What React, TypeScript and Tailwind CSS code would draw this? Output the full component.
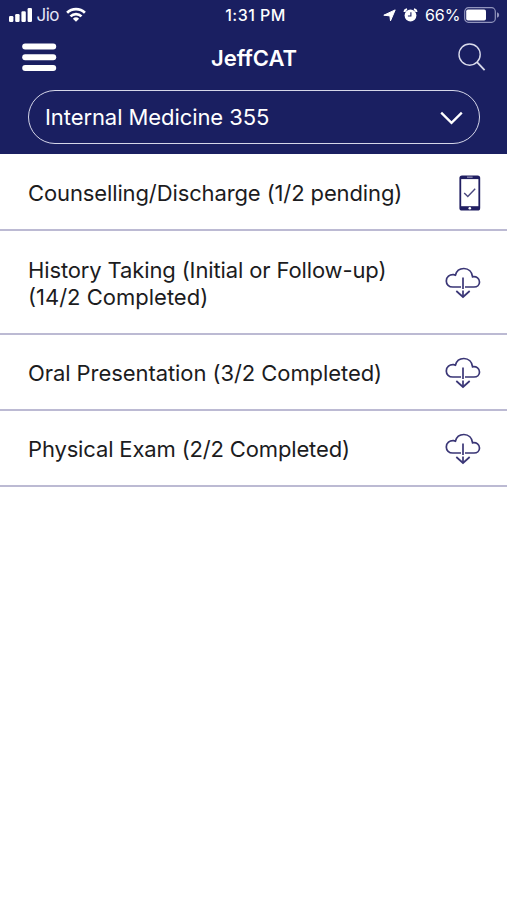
import type { ReactNode } from "react";

type TaskLine = {
  text: string;
  tracking: string;
};

type TaskRow = {
  id: string;
  lines: TaskLine[];
  height: string;
  icon: "device" | "cloud";
};

const tasks: TaskRow[] = [
  {
    id: "counselling",
    lines: [{ text: "Counselling/Discharge (1/2 pending)", tracking: "tracking-[-0.12px]" }],
    height: "h-[77px] pt-[2px]",
    icon: "device",
  },
  {
    id: "history",
    lines: [
      { text: "History Taking (Initial or Follow-up)", tracking: "tracking-[-0.13px]" },
      { text: "(14/2 Completed)", tracking: "tracking-normal" },
    ],
    height: "h-[104px] pt-[2px]",
    icon: "cloud",
  },
  {
    id: "oral",
    lines: [{ text: "Oral Presentation (3/2 Completed)", tracking: "tracking-[-0.07px]" }],
    height: "h-[76px] pt-[1px]",
    icon: "cloud",
  },
  {
    id: "physical",
    lines: [{ text: "Physical Exam (2/2 Completed)", tracking: "tracking-[-0.15px]" }],
    height: "h-[76px] pt-[1px]",
    icon: "cloud",
  },
];

function SignalIcon() {
  return (
    <svg width="24" height="16" viewBox="0 0 24 16" fill="currentColor">
      <rect x="0" y="9" width="4.4" height="6" rx="1.2" />
      <rect x="6.2" y="7" width="4.4" height="8" rx="1.2" />
      <rect x="12.4" y="4.2" width="4.4" height="10.8" rx="1.2" />
      <rect x="18.6" y="1" width="4.4" height="14" rx="1.2" />
    </svg>
  );
}

function WifiIcon() {
  return (
    <svg width="20" height="16" viewBox="0 0 20 16" fill="none" stroke="currentColor" strokeWidth="2.7">
      <path d="M1.1 5.8A12.6 12.6 0 0 1 18.9 5.8" />
      <path d="M4.5 9.4A7.9 7.9 0 0 1 15.5 9.4" />
      <path d="M10 14.8 6.9 11.8A4.5 4.5 0 0 1 13.1 11.8Z" fill="currentColor" stroke="none" />
    </svg>
  );
}

function LocationIcon() {
  return (
    <svg width="13" height="13" viewBox="0 0 13 13" fill="currentColor" stroke="currentColor" strokeWidth="1">
      <path d="M12.2.9 7.5 11.8 6.9 6.9.8 6.2Z" />
    </svg>
  );
}

function AlarmIcon() {
  return (
    <svg width="15" height="14" viewBox="0 0 15 14">
      <circle cx="7.5" cy="7.5" r="5.9" fill="currentColor" />
      <path d="M1.5 4A3 3 0 0 1 4.1 1.3M10.9 1.3A3 3 0 0 1 13.5 4" fill="none" stroke="currentColor" strokeWidth="2" />
      <path d="M7.9 4.2V8H4.9" fill="none" stroke="#1a1f61" strokeWidth="1.1" />
    </svg>
  );
}

function BatteryIcon() {
  return (
    <svg width="36" height="16" viewBox="0 0 36 16">
      <rect x="0.7" y="0.7" width="30.6" height="14.6" rx="3.8" fill="none" stroke="#9295bd" strokeWidth="1.2" />
      <rect x="2.2" y="2.5" width="19.8" height="11" rx="1.8" fill="white" />
      <path d="M33 5.2Q35.2 6 35.2 8T33 10.8Z" fill="#9295bd" />
    </svg>
  );
}

function DeviceIcon() {
  return (
    <svg width="22" height="36" viewBox="0 0 22 36">
      <rect x="0.4" y="0.4" width="20.8" height="35.2" rx="2.6" fill="#211f62" />
      <rect x="2.2" y="4.1" width="17.2" height="27.1" fill="white" />
      <path d="M8 2.2h5.6" stroke="#8b8ab0" strokeWidth="1.3" />
      <circle cx="10.8" cy="33.2" r="1.3" fill="white" />
      <path d="m5.2 17.9 3.6 3.7 7.4-7.8" fill="none" stroke="#4b487f" strokeWidth="1.4" />
    </svg>
  );
}

function CloudIcon() {
  return (
    <svg width="36" height="32" viewBox="0 0 36 32" fill="none" stroke="#3a3676" strokeWidth="1.7">
      <path d="M16 20H7.8C3.9 20 1.3 17.4 1.3 13.9 1.3 10 4.6 7.3 8.7 7.7L10.4 8.2C11.4 4.1 14.7 1.5 18.9 1.5 23.7 1.5 27 4.9 27.6 9.8 31.6 9.2 34.5 11.7 34.5 14.9 34.5 18 32.2 20 29 20H20" />
      <path d="M18 10.4V22" />
      <path d="M18 23.4V30" />
      <path d="m11.3 24 6.7 6 6.7-6" />
    </svg>
  );
}

function StatusBar() {
  return (
    <div className="flex h-[30px] items-center justify-between text-[16px] leading-none">
      <div className="flex w-[200px] items-center pl-[8.5px]">
        <SignalIcon />
        <span className="ml-[4px] w-[22px] text-[17px] tracking-[-0.5px] text-[#e4e5f4]">Jio</span>
        <span className="ml-[7px]">
          <WifiIcon />
        </span>
      </div>
      <span className="pl-[4px] text-[16px] font-medium tracking-[0.45px] whitespace-nowrap">1:31 PM</span>
      <div className="flex w-[200px] items-center justify-end pr-[7px]">
        <LocationIcon />
        <span className="ml-[7px]">
          <AlarmIcon />
        </span>
        <span className="ml-[7px] w-[35px] text-[16px] tracking-[-0.1px] whitespace-nowrap">66%</span>
        <span className="ml-[4px]">
          <BatteryIcon />
        </span>
      </div>
    </div>
  );
}

function IconButton({ label, children }: { label: string; children: ReactNode }) {
  return (
    <button type="button" aria-label={label} className="flex items-center justify-center">
      {children}
    </button>
  );
}

export default function App() {
  return (
    <main className="min-h-screen w-full bg-white font-['Inter','Liberation_Sans',sans-serif] text-[#1c1c1e]">
      <header className="h-[154px] bg-[#1a1f61] text-white">
        <StatusBar />
        <div className="flex h-[54px] items-center justify-between pr-[21px] pl-[22px]">
          <IconButton label="Menu">
            <svg width="35" height="29" viewBox="0 0 35 29" fill="currentColor">
              <rect x="0.2" y="0.4" width="34" height="6" rx="3" />
              <rect x="0.2" y="11.2" width="34" height="6" rx="3" />
              <rect x="0.2" y="22" width="34" height="6" rx="3" />
            </svg>
          </IconButton>
          <h1 className="pt-[2px] pr-[7px] text-[22px] font-semibold">JeffCAT</h1>
          <IconButton label="Search">
            <svg width="28" height="29" viewBox="0 0 28 29" fill="none" stroke="#d9daeb" strokeWidth="1.4">
              <circle cx="11.6" cy="11.6" r="10.6" />
              <path d="m19 19.2 7.6 7.9" strokeWidth="1.8" />
            </svg>
          </IconButton>
        </div>
        <div className="pt-[6px] pr-[27px] pl-[28px]">
          <button
            type="button"
            className="flex h-[54px] w-full items-center justify-between rounded-full border-[1.5px] border-[#d5d6e9] pr-[16px] pl-[16px] text-left text-[22px]"
          >
            <span className="tracking-[-0.08px]">Internal Medicine 355</span>
            <svg width="23" height="14" viewBox="0 0 23 14" fill="none" stroke="currentColor" strokeWidth="2.3" className="mt-[2px]">
              <path d="m1.2 1.6 10.3 10.2L21.8 1.6" />
            </svg>
          </button>
        </div>
      </header>
      <ul>
        {tasks.map((task) => (
          <li
            key={task.id}
            className={`flex items-center justify-between border-b-2 border-[#bcbad3] pr-[26px] pl-[28px] ${task.height}`}
          >
            <div className="pt-px text-[22px] leading-[27px] whitespace-nowrap">
              {task.lines.map((line) => (
                <p key={line.text} className={line.tracking}>
                  {line.text}
                </p>
              ))}
            </div>
            {task.icon === "device" ? <DeviceIcon /> : <CloudIcon />}
          </li>
        ))}
      </ul>
    </main>
  );
}
